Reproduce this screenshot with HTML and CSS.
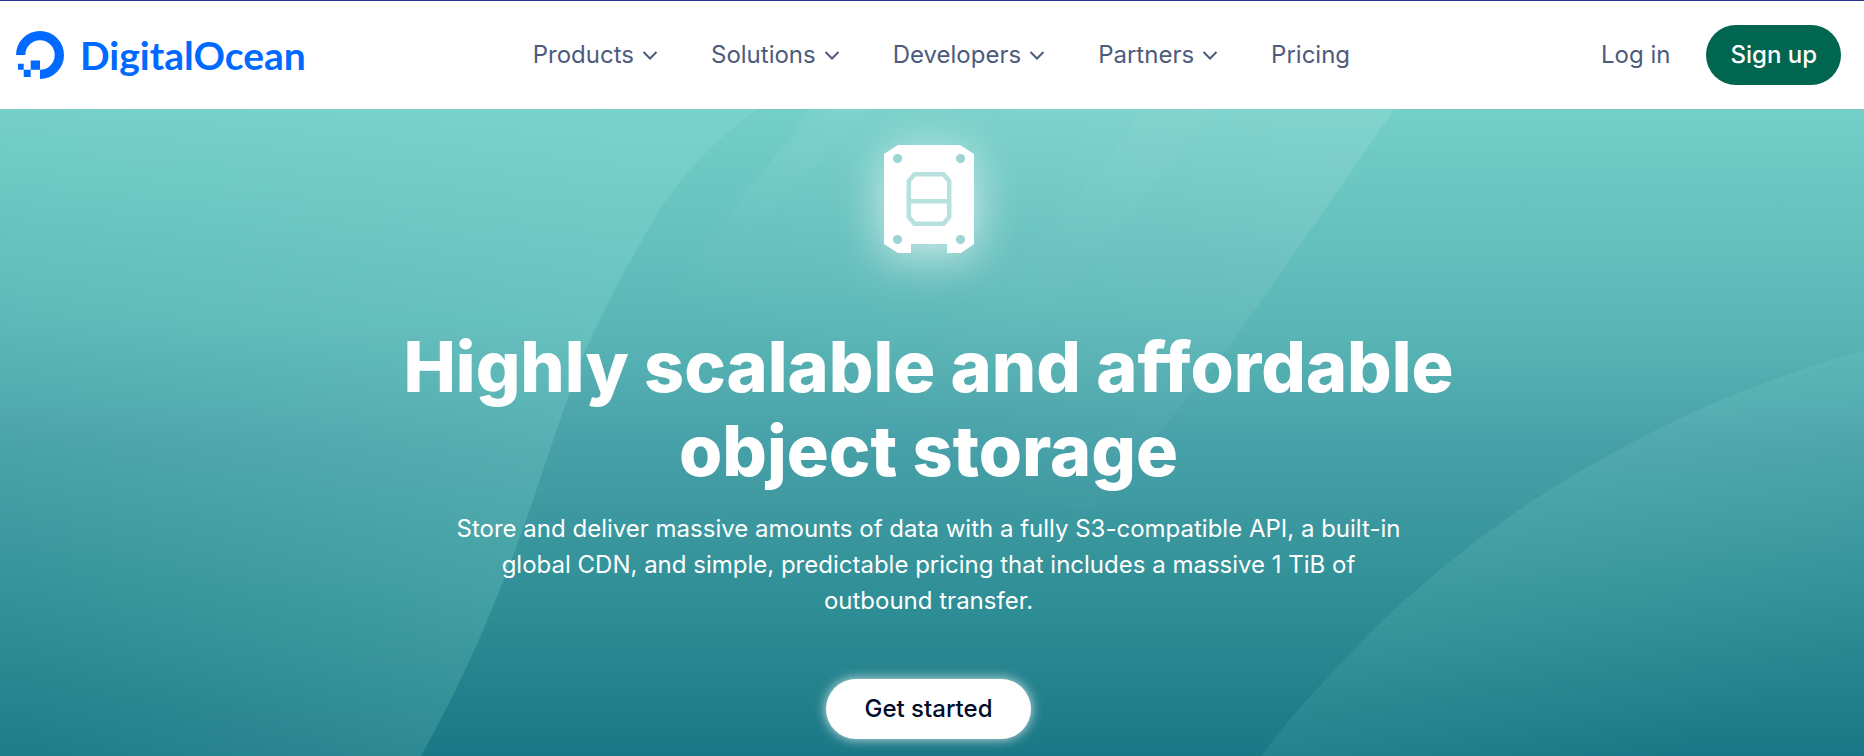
FILE: index.html
```html
<!DOCTYPE html>
<html lang="en">
<head>
<meta charset="utf-8">
<meta name="viewport" content="width=device-width, initial-scale=1">
<title>DigitalOcean Spaces</title>
<link rel="stylesheet" href="styles.css">
</head>
<body>
<header class="site-header">
  <a class="brand" href="#">
    <svg class="brand-mark" viewBox="0 0 48 48" aria-hidden="true">
      <path d="M24 48v-9.3A14.7 14.7 0 1 0 9.300 24H0A24 24 0 1 1 24 48Z"/>
      <path d="M14.700 29.400H24v9.300h-9.300zM7.700 38.700h7V46h-7zM2 32.700h5.700v6H2z"/>
    </svg>
    <span class="brand-name">DigitalOcean</span>
  </a>
  <nav class="main-nav" aria-label="Main">
    <button class="nav-item" type="button">Products<svg class="chevron" viewBox="0 0 24 24" aria-hidden="true"><path d="M5.500 9l6.500 6.500L18.500 9"/></svg></button>
    <button class="nav-item" type="button">Solutions<svg class="chevron" viewBox="0 0 24 24" aria-hidden="true"><path d="M5.500 9l6.500 6.500L18.500 9"/></svg></button>
    <button class="nav-item" type="button">Developers<svg class="chevron" viewBox="0 0 24 24" aria-hidden="true"><path d="M5.500 9l6.500 6.500L18.500 9"/></svg></button>
    <button class="nav-item" type="button">Partners<svg class="chevron" viewBox="0 0 24 24" aria-hidden="true"><path d="M5.500 9l6.500 6.500L18.500 9"/></svg></button>
    <a class="nav-item" href="#">Pricing</a>
  </nav>
  <div class="account">
    <a class="login" href="#">Log in</a>
    <a class="signup" href="#">Sign up</a>
  </div>
</header>
<main class="hero">
  <svg class="waves" viewBox="0 0 1864 647" preserveAspectRatio="none" aria-hidden="true">
    <defs>
      <linearGradient id="left" gradientUnits="userSpaceOnUse" x1="0" y1="300" x2="640" y2="240">
        <stop offset="0" stop-color="#8de0d5" stop-opacity=".04"/>
        <stop offset="1" stop-color="#8de0d5" stop-opacity=".26"/>
      </linearGradient>
      <linearGradient id="right" gradientUnits="userSpaceOnUse" x1="1500" y1="310" x2="1680" y2="640">
        <stop offset="0" stop-color="#8de0d5" stop-opacity=".18"/>
        <stop offset="1" stop-color="#8de0d5" stop-opacity="0"/>
      </linearGradient>
      <linearGradient id="beam" gradientUnits="userSpaceOnUse" x1="1250" y1="0" x2="1010" y2="400">
        <stop offset="0" stop-color="#fff" stop-opacity=".1"/>
        <stop offset="1" stop-color="#fff" stop-opacity="0"/>
      </linearGradient>
      <linearGradient id="ray" x1="1" y1="0" x2="0" y2="1">
        <stop offset="0" stop-color="#fff" stop-opacity=".03"/>
        <stop offset="1" stop-color="#fff" stop-opacity="0"/>
      </linearGradient>
    </defs>
    <path fill="url(#left)" d="M0 0H758C712 32 681 69 663 96C633 145 614 180 585 242C560 309 552 336 538 376C505 475 468 563 421 647H0Z"/>
    <path fill="url(#right)" d="M1864 241C1810 257 1757 275 1705 298C1650 322 1600 350 1556 377C1495 414 1445 456 1407 489C1366 525 1334 563 1312 585C1291 608 1275 629 1261 647H1864Z"/>
    <path fill="url(#beam)" d="M810 0H1394C1328 98 1270 178 1240 222C1200 275 1150 335 1095 400H700Q600 300 690 160Z"/>
    <path fill="url(#ray)" d="M830 0H870L755 120L660 170L737 83Z"/>
    <path fill="url(#ray)" d="M1142 0H1212Q1100 150 1000 250H900Q1060 130 1142 0Z"/>
  </svg>
  <svg class="hero-icon" viewBox="0 0 90 108" role="img" aria-label="Spaces object storage">
    <path fill="#fff" d="M14 0H76L90 9V99L77 108H63V99H27V108H14L0 99V9Z"/>
    <g fill="#9cd5d2"><circle cx="13.500" cy="13.500" r="4.600"/><circle cx="76.500" cy="13.500" r="4.600"/><circle cx="13.500" cy="94.500" r="4.600"/><circle cx="76.500" cy="94.500" r="4.600"/></g>
    <path fill="none" stroke="#b7e1df" stroke-width="4.500" d="M30.500 29.200H59.500L65.200 36V72L59.500 78.800H30.500L24.800 72V36ZM25 56.200H65"/>
  </svg>
  <h1 class="hero-title">Highly scalable and affordable object storage</h1>
  <p class="hero-text">Store and deliver massive amounts of data with a fully S3-compatible API, a built-in global CDN, and simple, predictable pricing that includes a massive 1 TiB of outbound transfer.</p>
  <a class="hero-cta" href="#">Get started</a>
</main>
</body>
</html>
```
FILE: styles.css
```css
* { box-sizing: border-box; }

body {
  margin: 0;
  min-height: 100vh;
  display: flex;
  flex-direction: column;
  font-family: Inter, "Liberation Sans", sans-serif;
  font-size: 24px;
  line-height: 36px;
  color: #fff;
}

a { color: inherit; text-decoration: none; }

.site-header {
  display: flex;
  align-items: center;
  justify-content: space-between;
  padding: 24px 23px 24px 16px;
  border-top: 1px solid #283593;
  background: #fff;
  color: #4d5b7c;
}

.brand {
  display: flex;
  align-items: center;
  gap: 16px;
  color: #0069ff;
}

.brand-mark { width: 48px; height: 48px; fill: currentColor; }

.brand-name {
  font-family: Lato, sans-serif;
  font-size: 39px;
  font-weight: 700;
  line-height: 48px;
}

.main-nav { display: flex; gap: 49px; margin-right: 24px; }

.nav-item {
  display: flex;
  align-items: center;
  gap: 4px;
  padding: 0;
  border: 0;
  background: none;
  color: inherit;
  font: inherit;
  white-space: nowrap;
}

.chevron {
  width: 24px;
  height: 24px;
  fill: none;
  stroke: currentColor;
  stroke-width: 2;
}

.account { display: flex; align-items: center; gap: 36px; white-space: nowrap; }

.signup {
  padding: 12px 24px;
  border-radius: 30px;
  background: #00664f;
  color: #fff;
  font-weight: 500;
}

.hero {
  position: relative;
  isolation: isolate;
  flex: 1;
  display: flex;
  flex-direction: column;
  align-items: center;
  padding: 36px 31px 17px 24px;
  background: linear-gradient(#74cfc8, #5bb7b7 33%, #47a0a8 52%, #2e8e95 77%, #1a7786);
  text-align: center;
}

.waves {
  position: absolute;
  inset: 0;
  z-index: -1;
  width: 100%;
  height: 100%;
}

.hero-icon {
  width: 90px;
  height: 108px;
  filter: drop-shadow(0 8px 24px rgba(255, 255, 255, 0.7));
}

.hero-title {
  max-width: 1120px;
  margin: 72px 0 18px;
  font-size: 70px;
  font-weight: 800;
  line-height: 84px;
}

.hero-text { max-width: 960px; margin: 0 0 60px; }

.hero-cta {
  padding: 12px 38px;
  border-radius: 30px;
  background: #fff;
  box-shadow: 0 0 12px rgba(255, 255, 255, 0.8);
  color: #000c2a;
  font-weight: 500;
}
```
